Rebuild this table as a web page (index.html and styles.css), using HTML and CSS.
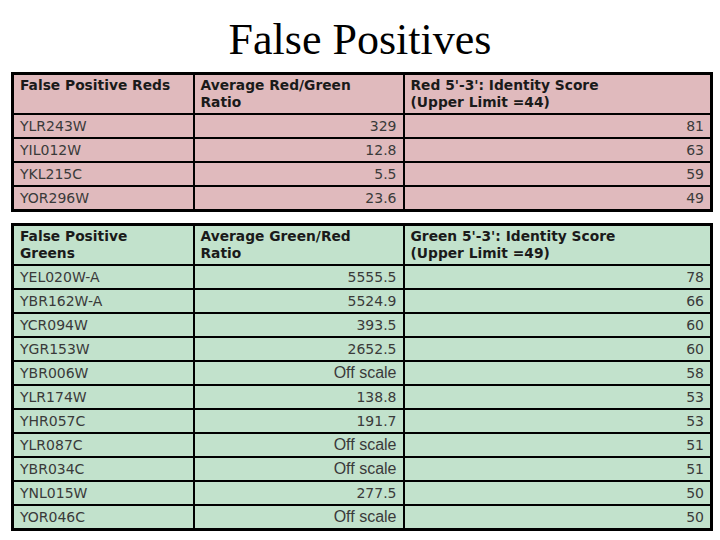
FILE: index.html
```html
<!DOCTYPE html>
<html>
<head>
<meta charset="utf-8">
<link rel="stylesheet" href="styles.css">
</head>
<body>
<h1 class="title">False Positives</h1>
<table class="data red">
  <colgroup><col class="c1"><col class="c2"><col class="c3"></colgroup>
  <tr class="head"><th>False Positive Reds</th><th>Average Red/Green<br>Ratio</th><th>Red 5'-3': Identity Score<br>(Upper Limit =44)</th></tr>
  <tr><td>YLR243W</td><td class="num">329</td><td class="num">81</td></tr>
  <tr><td>YIL012W</td><td class="num">12.8</td><td class="num">63</td></tr>
  <tr><td>YKL215C</td><td class="num">5.5</td><td class="num">59</td></tr>
  <tr><td>YOR296W</td><td class="num">23.6</td><td class="num">49</td></tr>
</table>
<table class="data green">
  <colgroup><col class="c1"><col class="c2"><col class="c3"></colgroup>
  <tr class="head"><th>False Positive<br>Greens</th><th>Average Green/Red<br>Ratio</th><th>Green 5'-3': Identity Score<br>(Upper Limit =49)</th></tr>
  <tr><td>YEL020W-A</td><td class="num">5555.5</td><td class="num">78</td></tr>
  <tr><td>YBR162W-A</td><td class="num">5524.9</td><td class="num">66</td></tr>
  <tr><td>YCR094W</td><td class="num">393.5</td><td class="num">60</td></tr>
  <tr><td>YGR153W</td><td class="num">2652.5</td><td class="num">60</td></tr>
  <tr><td>YBR006W</td><td class="num sans">Off scale</td><td class="num">58</td></tr>
  <tr><td>YLR174W</td><td class="num">138.8</td><td class="num">53</td></tr>
  <tr><td>YHR057C</td><td class="num">191.7</td><td class="num">53</td></tr>
  <tr><td>YLR087C</td><td class="num sans">Off scale</td><td class="num">51</td></tr>
  <tr><td>YBR034C</td><td class="num sans">Off scale</td><td class="num">51</td></tr>
  <tr><td>YNL015W</td><td class="num">277.5</td><td class="num">50</td></tr>
  <tr><td>YOR046C</td><td class="num sans">Off scale</td><td class="num">50</td></tr>
</table>
</body>
</html>
```
FILE: styles.css
```css
html, body {
  margin: 0;
  padding: 0;
  background: #ffffff;
}
body {
  width: 720px;
  height: 540px;
  overflow: hidden;
}
.title {
  margin: 0;
  height: 72px;
  box-sizing: border-box;
  padding-top: 15px;
  text-align: center;
  font-family: "Liberation Serif", "Times New Roman", serif;
  font-weight: normal;
  font-size: 44px;
  line-height: 50px;
  color: #000;
}
.data {
  margin-left: 11px;
  width: 699px;
  border-collapse: collapse;
  border: 3px solid #000;
  table-layout: fixed;
  font-family: "DejaVu Sans", Verdana, sans-serif;
  font-size: 14px;
  color: #3a3a3a;
}
.green {
  margin-top: 11px;
}
.c1 { width: 181px; }
.c2 { width: 210px; }
.c3 { width: 308px; }
.data th, .data td {
  border: 2px solid #000;
  padding: 0 6px 0 6px;
  overflow: hidden;
  white-space: nowrap;
}
.data th {
  height: 36px;
  text-align: left;
  vertical-align: top;
  font-weight: bold;
  font-size: 13.8px;
  color: #1a1a1a;
  line-height: 17px;
  padding-top: 2px;
  padding-bottom: 0;
}
.data td {
  height: 22px;
  line-height: 22px;
  font-weight: normal;
}
.data td.num {
  text-align: right;
}
.data td.sans {
  font-family: "Liberation Sans", Arial, sans-serif;
  font-size: 16px;
}
.red th, .red td { background: #e0babd; }
.green th, .green td { background: #c2e2cc; }
```
